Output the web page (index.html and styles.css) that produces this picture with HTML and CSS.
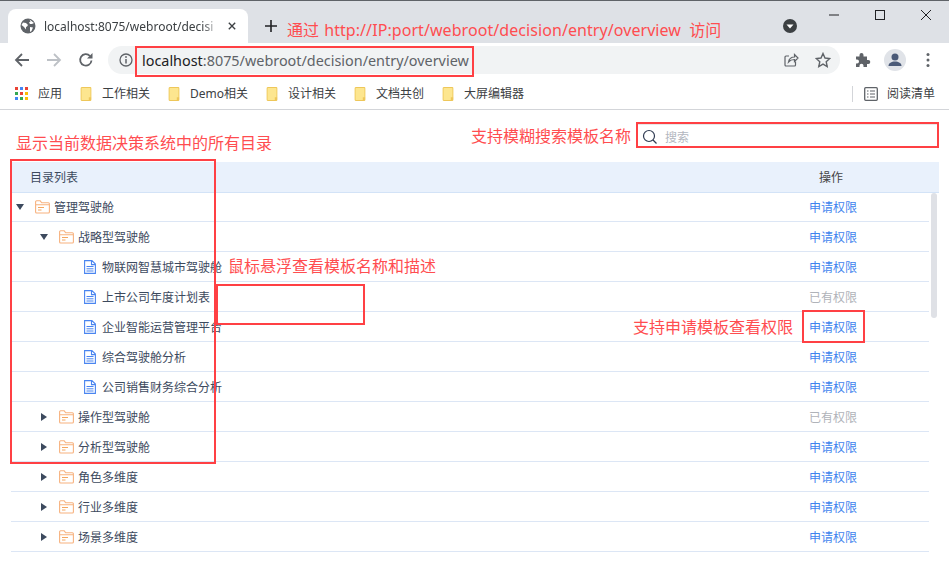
FILE: index.html
```html
<!DOCTYPE html>
<html lang="zh">
<head>
<meta charset="utf-8">
<title>overview</title>
<link rel="stylesheet" href="styles.css">
</head>
<body>
<div class="window">
  <header class="tabstrip">
    <div class="tab">
      <svg class="favicon" viewBox="0 0 16 16"><circle cx="8" cy="8" r="7.5" fill="#5f6368"/><path d="M3 4.500l3 .5 2 2-1 1.500-1 .5v2.500L4 9 1.500 7zM9.500 1.500l1 2-1.500 1 1 1.500h2l2-1M10 9l3 .5-1.500 3.500-1.500 1z" fill="#fff"/></svg>
      <span class="tab-title">localhost:8075/webroot/decisi</span>
      <svg class="tab-close" viewBox="0 0 10 10"><path d="M1 1l8 8M9 1l-8 8" stroke="#3c4043" stroke-width="1.700" fill="none"/></svg>
    </div>
    <svg class="newtab" viewBox="0 0 12 12"><path d="M6 0v12M0 6h12" stroke="#202124" stroke-width="1.600"/></svg>
    <span class="strip-spacer"></span>
    <svg class="tabsearch" viewBox="0 0 14 14"><circle cx="7" cy="7" r="7" fill="#3c4043"/><path d="M3.500 5.500h7L7 9.500z" fill="#fff"/></svg>
    <div class="winctl">
      <svg viewBox="0 0 12 12"><path d="M1 6h10" stroke="#202124" stroke-width="1"/></svg>
      <svg viewBox="0 0 12 12"><rect x="1.500" y="1.500" width="9" height="9" fill="none" stroke="#202124" stroke-width="1"/></svg>
      <svg viewBox="0 0 12 12"><path d="M1 1l10 10M11 1L1 11" stroke="#202124" stroke-width="1" fill="none"/></svg>
    </div>
  </header>

  <nav class="toolbar">
    <svg class="nav-ico" viewBox="0 0 16 16"><path d="M15 8H2M8 2L2 8l6 6" stroke="#5f6368" stroke-width="1.800" fill="none"/></svg>
    <svg class="nav-ico" viewBox="0 0 16 16"><path d="M1 8h13M8 2l6 6-6 6" stroke="#bdc1c6" stroke-width="1.800" fill="none"/></svg>
    <svg class="nav-ico last" viewBox="0 0 16 16"><path d="M13.500 8.500A5.700 5.700 0 1 1 12 4" stroke="#5f6368" stroke-width="1.800" fill="none"/><path d="M14.500 1v5.500H9z" fill="#5f6368"/></svg>
    <div class="omnibox">
      <svg class="info" viewBox="0 0 14 14"><circle cx="7" cy="7" r="6" fill="none" stroke="#5f6368" stroke-width="1.300"/><path d="M7 6v4.500" stroke="#5f6368" stroke-width="1.500"/><circle cx="7" cy="4" r=".9" fill="#5f6368"/></svg>
      <span class="url"><b class="host">localhost</b>:8075/webroot/decision/entry/overview</span>
      <span class="strip-spacer"></span>
      <svg class="omni-ico" viewBox="0 0 16 16"><path d="M12.500 9.500V13a1 1 0 0 1-1 1H3a1 1 0 0 1-1-1V5a1 1 0 0 1 1-1h3" stroke="#5f6368" stroke-width="1.200" fill="none"/><path d="M5.500 10c.5-3 2.500-5 6-5V2.500L15 6l-3.500 3.500V7.500c-2.500 0-4.500.7-6 2.500z" stroke="#5f6368" stroke-width="1.200" fill="none"/></svg>
      <svg class="omni-ico" viewBox="0 0 16 16"><path d="M8 1.500l2 4.500 4.800.5-3.600 3.200 1 4.800L8 12.100l-4.200 2.400 1-4.800L1.200 6.500 6 6z" stroke="#5f6368" stroke-width="1.400" fill="none"/></svg>
    </div>
    <svg class="puzzle" viewBox="0 0 16 16"><path d="M1 4.500h3.500V3a2 2 0 0 1 4 0v1.500H12V8h1.300a2 2 0 0 1 0 4H12v3H8.500v-1.300a2 2 0 0 0-4 0V15H1v-3.500h1a2 2 0 0 0 0-4H1z" fill="#5f6368"/></svg>
    <span class="avatar"><svg viewBox="0 0 22 22"><circle cx="11" cy="8" r="3.500" fill="#4a5a78"/><path d="M4.500 17c0-3 3-4.500 6.500-4.500s6.500 1.500 6.500 4.500z" fill="#4a5a78"/></svg></span>
    <svg class="dots" viewBox="0 0 4 16"><circle cx="2" cy="2.500" r="1.500" fill="#5f6368"/><circle cx="2" cy="8" r="1.500" fill="#5f6368"/><circle cx="2" cy="13.500" r="1.500" fill="#5f6368"/></svg>
  </nav>

  <nav class="bookmarks">
    <span class="bm">
      <svg class="apps" viewBox="0 0 13 13">
        <rect width="3" height="3" fill="#ea4335"/><rect x="5" width="3" height="3" fill="#4285f4"/><rect x="10" width="3" height="3" fill="#ea4335"/>
        <rect y="5" width="3" height="3" fill="#34a853"/><rect x="5" y="5" width="3" height="3" fill="#ea4335"/><rect x="10" y="5" width="3" height="3" fill="#fbbc05"/>
        <rect y="10" width="3" height="3" fill="#4285f4"/><rect x="5" y="10" width="3" height="3" fill="#34a853"/><rect x="10" y="10" width="3" height="3" fill="#fbbc05"/>
      </svg>应用</span>
    <span class="bm"><svg class="bmf" viewBox="0 0 12 15"><use href="#bmfolder"/></svg>工作相关</span>
    <span class="bm"><svg class="bmf" viewBox="0 0 12 15"><use href="#bmfolder"/></svg>Demo相关</span>
    <span class="bm"><svg class="bmf" viewBox="0 0 12 15"><use href="#bmfolder"/></svg>设计相关</span>
    <span class="bm"><svg class="bmf" viewBox="0 0 12 15"><use href="#bmfolder"/></svg>文档共创</span>
    <span class="bm"><svg class="bmf" viewBox="0 0 12 15"><use href="#bmfolder"/></svg>大屏编辑器</span>
    <span class="strip-spacer"></span>
    <span class="bm reading"><svg class="readico" viewBox="0 0 14 14"><rect x=".7" y=".7" width="12.600" height="12.600" rx="1" fill="none" stroke="#5f6368" stroke-width="1.300"/><path d="M3 4h1.500M6 4h5M3 7h1.500M6 7h5M3 10h1.500M6 10h5" stroke="#5f6368" stroke-width="1.200"/></svg>阅读清单</span>
  </nav>

  <main class="page">
    <div class="searchrow">
      <div class="search">
        <svg class="search-ico" viewBox="0 0 16 16"><circle cx="7" cy="7" r="5.500" fill="none" stroke="#2f3b52" stroke-width="1.200"/><path d="M11 11l3.500 3.500" stroke="#2f3b52" stroke-width="1.300"/></svg>
        <span class="placeholder">搜索</span>
      </div>
    </div>
    <div class="thead"><span class="th-name">目录列表</span><span class="th-op">操作</span></div>
    <div class="tbody">
      <div class="rows">
        <div class="row"><svg class="caret" viewBox="0 0 8 8"><path d="M0 1h8L4 7z"/></svg><svg class="folder" viewBox="0 0 15 14"><use href="#folder"/></svg><span class="name">管理驾驶舱</span><span class="act">申请权限</span></div>
        <div class="row l1"><svg class="caret" viewBox="0 0 8 8"><path d="M0 1h8L4 7z"/></svg><svg class="folder" viewBox="0 0 15 14"><use href="#folder"/></svg><span class="name">战略型驾驶舱</span><span class="act">申请权限</span></div>
        <div class="row l2"><svg class="doc" viewBox="0 0 12 14"><use href="#doc"/></svg><span class="name">物联网智慧城市驾驶舱</span><span class="act">申请权限</span></div>
        <div class="row l2"><svg class="doc" viewBox="0 0 12 14"><use href="#doc"/></svg><span class="name">上市公司年度计划表</span><span class="act has">已有权限</span></div>
        <div class="row l2"><svg class="doc" viewBox="0 0 12 14"><use href="#doc"/></svg><span class="name">企业智能运营管理平台</span><span class="act">申请权限</span></div>
        <div class="row l2"><svg class="doc" viewBox="0 0 12 14"><use href="#doc"/></svg><span class="name">综合驾驶舱分析</span><span class="act">申请权限</span></div>
        <div class="row l2"><svg class="doc" viewBox="0 0 12 14"><use href="#doc"/></svg><span class="name">公司销售财务综合分析</span><span class="act">申请权限</span></div>
        <div class="row l1"><svg class="caret" viewBox="0 0 8 8"><path d="M1 0l6 4-6 4z"/></svg><svg class="folder" viewBox="0 0 15 14"><use href="#folder"/></svg><span class="name">操作型驾驶舱</span><span class="act has">已有权限</span></div>
        <div class="row l1"><svg class="caret" viewBox="0 0 8 8"><path d="M1 0l6 4-6 4z"/></svg><svg class="folder" viewBox="0 0 15 14"><use href="#folder"/></svg><span class="name">分析型驾驶舱</span><span class="act">申请权限</span></div>
        <div class="row l1"><svg class="caret" viewBox="0 0 8 8"><path d="M1 0l6 4-6 4z"/></svg><svg class="folder" viewBox="0 0 15 14"><use href="#folder"/></svg><span class="name">角色多维度</span><span class="act">申请权限</span></div>
        <div class="row l1"><svg class="caret" viewBox="0 0 8 8"><path d="M1 0l6 4-6 4z"/></svg><svg class="folder" viewBox="0 0 15 14"><use href="#folder"/></svg><span class="name">行业多维度</span><span class="act">申请权限</span></div>
        <div class="row l1"><svg class="caret" viewBox="0 0 8 8"><path d="M1 0l6 4-6 4z"/></svg><svg class="folder" viewBox="0 0 15 14"><use href="#folder"/></svg><span class="name">场景多维度</span><span class="act">申请权限</span></div>
      </div>
      <div class="scrollbar"><span class="thumb"></span></div>
    </div>
  </main>

  <div class="note n-url">通过 <span class="n-latin">http://IP:port/webroot/decision/entry/overview</span> <span class="n-end">访问</span></div>
  <div class="note n-dir">显示当前数据决策系统中的所有目录</div>
  <div class="note n-search">支持模糊搜索模板名称</div>
  <div class="note n-hover">鼠标悬浮查看模板名称和描述</div>
  <div class="note n-perm">支持申请模板查看权限</div>
  <div class="box b-url"></div>
  <div class="box b-search"></div>
  <div class="box b-tree"></div>
  <div class="box b-hover"></div>
  <div class="box b-perm"></div>
</div>

<svg class="defs" width="0" height="0">
  <symbol id="folder" viewBox="0 0 15 14"><path d="M.6 12V1.800a1 1 0 0 1 1-1h3.600l1.500 2h6.700a1 1 0 0 1 1 1V12a1 1 0 0 1-1 1H1.600a1 1 0 0 1-1-1zM.6 4.800h13.800" fill="none" stroke="#f7b27f" stroke-width="1.100"/><path d="M3 7.500h6M3 10h3.500" stroke="#f5a65f" stroke-width="1"/></symbol>
  <symbol id="doc" viewBox="0 0 12 14"><path d="M.6.600h7.300l3.500 3.500v9.300H.6zM7.500.6v4h3.900" fill="none" stroke="#4a85f0" stroke-width="1.100"/><path d="M2.500 6.500h7M2.500 8.800h7M2.500 11h7" stroke="#4a85f0" stroke-width="1"/></symbol>
  <symbol id="bmfolder" viewBox="0 0 12 15"><path d="M.6 1.600a1 1 0 0 1 1-1h8.800a1 1 0 0 1 1 1v11.800a1 1 0 0 1-1 1H1.600a1 1 0 0 1-1-1z" fill="#fde68f" stroke="#eec75a" stroke-width="1.200"/><path d="M9 11h2.500v3.500H9z" fill="#eec75a"/></symbol>
</svg>
</body>
</html>
```
FILE: styles.css
```css
* { box-sizing: border-box; }
html, body { margin: 0; padding: 0; }
body {
  width: 949px;
  height: 563px;
  overflow: hidden;
  background: #fff;
  font-family: "Noto Sans", "Noto Sans CJK SC", sans-serif;
  color: #3c4043;
}
.window { position: relative; width: 949px; height: 563px; overflow: hidden; }
.defs { position: absolute; }
.strip-spacer { flex: 1; }

.tabstrip {
  height: 43px;
  background: #dee1e6;
  border-top: 1px solid #5f6368;
  display: flex;
  align-items: flex-start;
  padding: 8px 0 0 8px;
}
.tab {
  width: 240px;
  height: 34px;
  background: #fff;
  border-radius: 8px 8px 0 0;
  display: flex;
  align-items: center;
  padding: 0 12px;
}
.favicon { width: 16px; height: 16px; margin-right: 8px; flex: none; }
.tab-title {
  font-size: 12px;
  width: 176px;
  white-space: nowrap;
  color: #3c4043;
  -webkit-mask-image: linear-gradient(90deg, #000 90%, transparent);
  mask-image: linear-gradient(90deg, #000 90%, transparent);
}
.tab-close { width: 8px; height: 8px; margin-left: 8px; flex: none; }
.newtab { width: 12px; height: 12px; margin: 11px 0 0 17px; flex: none; }
.tabsearch { width: 14px; height: 14px; margin-top: 10px; flex: none; }
.winctl { display: flex; gap: 34px; margin: 0 17px 0 31px; flex: none; }
.winctl svg { width: 12px; height: 12px; }

.toolbar {
  height: 34px;
  display: flex;
  align-items: center;
  padding: 0 0 0 14px;
}
.nav-ico { width: 16px; height: 16px; margin-right: 16px; flex: none; }
.nav-ico.last { margin-right: 14px; }
.omnibox {
  width: 732px;
  height: 28px;
  background: #f1f3f4;
  border-radius: 14px;
  display: flex;
  align-items: center;
  padding: 0 9px 0 11px;
  flex: none;
}
.info { width: 14px; height: 14px; margin-right: 9px; flex: none; }
.url { font-size: 14.4px; color: #5f6368; white-space: nowrap; }
.host { font-weight: 400; color: #202124; }
.omni-ico { width: 16px; height: 16px; margin-left: 16px; flex: none; }
.puzzle { width: 16px; height: 16px; margin-left: 15px; flex: none; }
.avatar { width: 22px; height: 22px; border-radius: 50%; background: #e0e3e8; margin-left: 13px; flex: none; display: block; }
.avatar svg { width: 22px; height: 22px; display: block; }
.dots { width: 4px; height: 16px; margin-left: 20px; flex: none; }

.bookmarks {
  height: 33px;
  display: flex;
  align-items: center;
  padding: 1px 14px 0 15px;
  gap: 18px;
  border-bottom: 1px solid #d3d5d9;
}
.bm { display: flex; align-items: center; font-size: 12px; line-height: 16px; color: #3c4043; white-space: nowrap; }
.apps { width: 13px; height: 13px; margin-right: 10px; }
.bmf { width: 12px; height: 14px; margin-right: 10px; }
.reading { border-left: 1px solid #d3d5d9; padding-left: 11px; height: 16px; }
.readico { width: 14px; height: 14px; margin-right: 9px; }

.page { padding: 0 10px 0 11px; }
.searchrow { height: 52px; display: flex; justify-content: flex-end; padding-top: 14px; }
.search {
  width: 301px;
  height: 24px;
  display: flex;
  align-items: center;
  padding-left: 4px;
  border-top: 1px solid #e8e8e8;
}
.search-ico { width: 16px; height: 16px; margin-right: 7px; }
.placeholder { font-size: 12px; color: #b3b7bf; }

.thead {
  height: 31px;
  background: #e9f1fc;
  border-bottom: 1px solid #d3e3f7;
  display: flex;
  align-items: center;
  font-size: 12px;
  color: #3d4a5e;
}
.th-name { padding-left: 19px; flex: 1; }
.th-op { width: 120px; color: #444; }
.tbody { display: flex; margin-top: -1px; }
.rows { width: 918px; }
.row {
  height: 30px;
  border-bottom: 1px solid #dce6f5;
  display: flex;
  align-items: center;
  font-size: 12px;
  color: #3d4a5e;
  padding: 0 0 0 5px;
}
.l1 { padding-left: 29px; }
.l2 { padding-left: 73px; }
.caret { width: 8px; height: 8px; fill: #3d4a5e; margin-right: 11px; flex: none; }
.folder { width: 15px; height: 14px; margin-right: 4px; flex: none; }
.doc { width: 12px; height: 14px; margin-right: 6px; flex: none; }
.name { flex: 1; white-space: nowrap; }
.act { color: #3f84ee; width: 48px; margin-right: 72px; flex: none; }
.has { color: #b0b3b9; }
.scrollbar { width: 10px; padding: 1px 0 0 2px; }
.thumb { display: block; width: 6px; height: 125px; background: #dfe1e6; border-radius: 3px; }

.note {
  position: absolute;
  font-size: 16px;
  line-height: 22px;
  color: #ff4d50;
  white-space: nowrap;
}
.n-url { left: 287px; top: 19px; }
.n-latin { letter-spacing: .07px; margin-left: 1px; }
.n-end { margin-left: 4px; }
.n-dir { left: 16px; top: 132px; }
.n-search { left: 471px; top: 125px; }
.n-hover { left: 228px; top: 255px; }
.n-perm { left: 633px; top: 316px; }
.box { position: absolute; border: 2px solid #ff4044; }
.b-url { left: 135px; top: 46px; width: 339px; height: 31px; }
.b-search { left: 636px; top: 122px; width: 303px; height: 26px; }
.b-tree { left: 10px; top: 159px; width: 206px; height: 305px; }
.b-hover { left: 216px; top: 284px; width: 149px; height: 41px; }
.b-perm { left: 802px; top: 310px; width: 63px; height: 33px; }
```
